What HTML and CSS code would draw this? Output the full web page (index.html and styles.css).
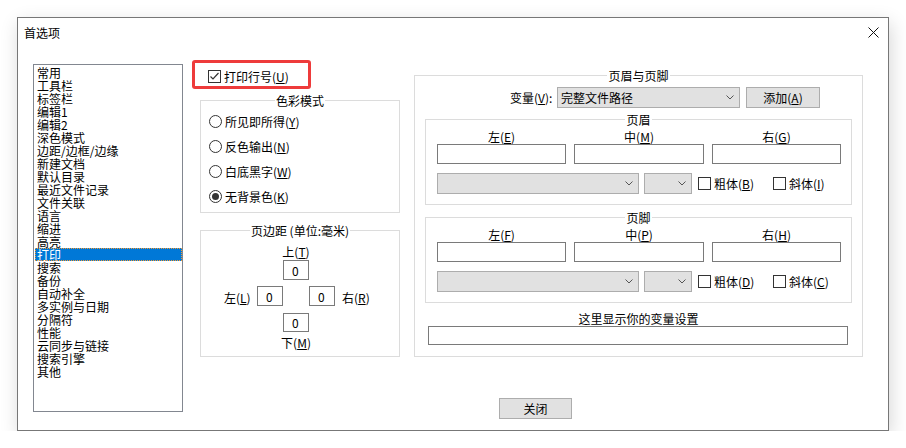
FILE: index.html
```html
<!DOCTYPE html>
<html lang="zh-CN">
<head>
  <meta charset="UTF-8" />
  <title>首选项</title>
  <link rel="stylesheet" href="styles.css">
</head>
<body>

  <div class="dialog">
    <!-- Title bar -->
    <div class="titlebar">
      <span class="title">首选项</span>
      <svg class="close-x" width="11" height="11" viewBox="0 0 11 11">
        <path d="M0.5 0.5 L10.5 10.5 M10.5 0.5 L0.5 10.5" />
      </svg>
    </div>

    <div class="content">
      <!-- Category list -->
      <ul class="listbox">
        <li>常用</li>
        <li>工具栏</li>
        <li>标签栏</li>
        <li>编辑1</li>
        <li>编辑2</li>
        <li>深色模式</li>
        <li>边距/边框/边缘</li>
        <li>新建文档</li>
        <li>默认目录</li>
        <li>最近文件记录</li>
        <li>文件关联</li>
        <li>语言</li>
        <li>缩进</li>
        <li>高亮</li>
        <li class="selected">打印</li>
        <li>搜索</li>
        <li>备份</li>
        <li>自动补全</li>
        <li>多实例与日期</li>
        <li>分隔符</li>
        <li>性能</li>
        <li>云同步与链接</li>
        <li>搜索引擎</li>
        <li>其他</li>
      </ul>

      <div class="pane">
        <div class="pane-top">
          <div class="mid">
            <div class="print-line">
              <span class="check">
                <svg width="11" height="11" viewBox="0 0 11 11"><path d="M1.5 5.5 L4 8 L9.5 2" /></svg>
              </span>
              打印行号(<u>U</u>)
            </div>

            <!-- Colour mode -->
            <div class="group color-group">
              <div class="group-title">色彩模式</div>
              <div class="radio-list">
                <div class="radio-row"><span class="radio"></span>所见即所得(<u>Y</u>)</div>
                <div class="radio-row"><span class="radio"></span>反色输出(<u>N</u>)</div>
                <div class="radio-row"><span class="radio"></span>白底黑字(<u>W</u>)</div>
                <div class="radio-row"><span class="radio on"></span>无背景色(<u>K</u>)</div>
              </div>
            </div>

            <!-- Page margins -->
            <div class="group margin-group">
              <div class="group-title">页边距 (单位:毫米)</div>
              <div class="margin-grid">
                <span class="m-top-label">上(<u>T</u>)</span>
                <input class="m-input m-top" value="0">
                <span class="m-left-label">左(<u>L</u>)</span>
                <input class="m-input m-left" value="0">
                <input class="m-input m-right" value="0">
                <span class="m-right-label">右(<u>R</u>)</span>
                <input class="m-input m-bottom" value="0">
                <span class="m-bottom-label">下(<u>M</u>)</span>
              </div>
            </div>
          </div>

          <!-- Header and footer -->
          <div class="group hf-group">
            <div class="group-title">页眉与页脚</div>
            <div class="var-row">
              <span class="var-label">变量(<u>V</u>):</span>
              <div class="combo var-combo">
                <span>完整文件路径</span>
                <svg class="chev" width="8" height="5" viewBox="0 0 8 5"><path d="M0.5 0.5 L4 4 L7.5 0.5" /></svg>
              </div>
              <button class="btn add-btn">添加(<u>A</u>)</button>
            </div>

            <div class="group sub-group">
              <div class="group-title">页眉</div>
              <div class="field-grid">
                <label>左(<u>E</u>)</label>
                <label>中(<u>M</u>)</label>
                <label>右(<u>G</u>)</label>
                <input class="field">
                <input class="field">
                <input class="field">
              </div>
              <div class="style-row">
                <div class="combo font-combo">
                  <span></span>
                  <svg class="chev" width="8" height="5" viewBox="0 0 8 5"><path d="M0.5 0.5 L4 4 L7.5 0.5" /></svg>
                </div>
                <div class="combo size-combo">
                  <span></span>
                  <svg class="chev" width="8" height="5" viewBox="0 0 8 5"><path d="M0.5 0.5 L4 4 L7.5 0.5" /></svg>
                </div>
                <div class="check-item bold"><span class="check"></span>粗体(<u>B</u>)</div>
                <div class="check-item"><span class="check"></span>斜体(<u>I</u>)</div>
              </div>
            </div>

            <div class="group sub-group">
              <div class="group-title">页脚</div>
              <div class="field-grid">
                <label>左(<u>F</u>)</label>
                <label>中(<u>P</u>)</label>
                <label>右(<u>H</u>)</label>
                <input class="field">
                <input class="field">
                <input class="field">
              </div>
              <div class="style-row">
                <div class="combo font-combo">
                  <span></span>
                  <svg class="chev" width="8" height="5" viewBox="0 0 8 5"><path d="M0.5 0.5 L4 4 L7.5 0.5" /></svg>
                </div>
                <div class="combo size-combo">
                  <span></span>
                  <svg class="chev" width="8" height="5" viewBox="0 0 8 5"><path d="M0.5 0.5 L4 4 L7.5 0.5" /></svg>
                </div>
                <div class="check-item bold"><span class="check"></span>粗体(<u>D</u>)</div>
                <div class="check-item"><span class="check"></span>斜体(<u>C</u>)</div>
              </div>
            </div>

            <div class="var-caption">这里显示你的变量设置</div>
            <input class="field var-field">
          </div>
        </div>

        <div class="actions">
          <button class="btn close-btn">关闭</button>
        </div>
      </div>
    </div>
  </div>

</body>
</html>
```

FILE: styles.css
```css
  body {
    margin: 0;
    background: #fff;
    font-family: "Noto Sans CJK SC", "Liberation Sans", sans-serif;
    font-size: 12px;
    color: #000;
  }

  u {
    text-decoration-thickness: 1px;
    text-underline-offset: 1px;
  }

  .dialog {
    margin: 17px 0 0 17px;
    width: 872px;
    height: 414px;
    box-sizing: border-box;
    border: 1px solid #777;
    background: #fff;
    box-shadow: 2px 6px 18px rgba(0, 0, 0, 0.16);
  }

  /* Title bar */
  .titlebar {
    display: flex;
    align-items: center;
    justify-content: space-between;
    height: 29px;
    padding: 0 9px 0 6px;
  }

  .close-x path {
    stroke: #111;
    stroke-width: 1;
    fill: none;
  }

  .content {
    display: flex;
    align-items: flex-start;
    padding: 13px 0 0 15px;
  }

  /* Category list */
  .listbox {
    list-style: none;
    margin: 4px 0 0;
    padding: 1px 0 0;
    width: 150px;
    height: 348px;
    box-sizing: border-box;
    border: 1px solid #828790;
  }

  .listbox li {
    height: 13px;
    line-height: 13px;
    margin-left: 1px;
    padding-left: 2px;
    white-space: nowrap;
  }

  .listbox li.selected {
    background: #0078d7;
    color: #fff;
    outline: 1px dotted #f59a32;
    outline-offset: -1px;
  }

  .pane {
    margin-left: 9px;
  }

  .pane-top {
    display: flex;
    align-items: flex-start;
  }

  .mid {
    width: 208px;
  }

  .print-line {
    display: flex;
    align-items: center;
    width: 119px;
    height: 29px;
    box-sizing: border-box;
    border: 3px solid #ee3b3b;
    border-radius: 3px;
    padding: 4px 0 0 13px;
    white-space: nowrap;
  }

  .check {
    display: inline-flex;
    align-items: center;
    justify-content: center;
    width: 13px;
    height: 13px;
    box-sizing: border-box;
    border: 1px solid #333;
    background: #fff;
    margin-right: 3px;
    flex-shrink: 0;
  }

  .check path {
    stroke: #333;
    stroke-width: 1.2;
    fill: none;
  }

  /* Group boxes */
  .group {
    border: 1px solid #dcdcdc;
    box-sizing: border-box;
  }

  .group-title {
    width: fit-content;
    margin: -7px auto 0;
    padding: 0 1px;
    background: #fff;
    line-height: 14px;
    white-space: nowrap;
  }

  .color-group {
    margin: 11px 0 0 8px;
    width: 200px;
    height: 113px;
  }

  .radio-list {
    margin-top: 1px;
    padding-left: 8px;
  }

  .radio-row {
    display: flex;
    align-items: center;
    height: 25px;
  }

  .radio {
    display: flex;
    align-items: center;
    justify-content: center;
    width: 13px;
    height: 13px;
    box-sizing: border-box;
    border: 1px solid #333;
    border-radius: 50%;
    margin-right: 3px;
  }

  .radio.on::after {
    content: '';
    width: 7px;
    height: 7px;
    border-radius: 50%;
    background: #333;
  }

  .margin-group {
    margin: 17px 0 0 8px;
    width: 200px;
    height: 127px;
  }

  .margin-grid {
    display: grid;
    grid-template-columns: 33px 26px 26px 26px 33px;
    grid-template-rows: 15px 26px 27px 23px 14px;
    margin: 7px 0 0 23px;
    line-height: 14px;
    white-space: nowrap;
  }

  .m-input {
    box-sizing: border-box;
    width: 26px;
    height: 20px;
    border: 1px solid #7a7a7a;
    padding: 0 0 0 8px;
    margin: 0;
    font: inherit;
    outline: none;
  }

  .m-top-label { grid-column: 3; grid-row: 1; justify-self: center; }
  .m-top { grid-column: 3; grid-row: 2; }
  .m-left-label { grid-column: 1; grid-row: 3; padding-top: 5px; }
  .m-left { grid-column: 2; grid-row: 3; }
  .m-right { grid-column: 4; grid-row: 3; }
  .m-right-label { grid-column: 5; grid-row: 3; padding: 5px 0 0 7px; }
  .m-bottom { grid-column: 3; grid-row: 4; height: 19px; }
  .m-bottom-label { grid-column: 3; grid-row: 5; justify-self: center; }

  /* Header and footer */
  .hf-group {
    margin: 15px 0 0 14px;
    width: 449px;
    height: 282px;
  }

  .var-row {
    display: flex;
    align-items: center;
    margin: 4px 0 0 95px;
  }

  .var-label {
    width: 43px;
    margin-right: 4px;
    white-space: nowrap;
  }

  .combo {
    display: flex;
    align-items: center;
    justify-content: space-between;
    height: 21px;
    box-sizing: border-box;
    border: 1px solid #adadad;
    background: #e1e1e1;
    padding: 0 5px 0 3px;
  }

  .chev path {
    stroke: #555;
    stroke-width: 1;
    fill: none;
  }

  .var-combo {
    width: 183px;
  }

  .btn {
    height: 21px;
    box-sizing: border-box;
    border: 1px solid #adadad;
    background: #e1e1e1;
    padding: 0;
    font: inherit;
    color: #000;
  }

  .add-btn {
    width: 74px;
    margin-left: 6px;
  }

  .sub-group {
    margin: 11px 0 0 10px;
    width: 427px;
    height: 86px;
  }

  .sub-group + .sub-group {
    margin-top: 12px;
  }

  .field-grid {
    display: grid;
    grid-template-columns: 129px 130px 129px;
    column-gap: 8px;
    margin: 3px 0 0 11px;
  }

  .field-grid label {
    text-align: center;
    line-height: 14px;
  }

  .field {
    display: block;
    height: 20px;
    box-sizing: border-box;
    border: 1px solid #7a7a7a;
    margin: 0;
    padding: 0 3px;
    font: inherit;
    outline: none;
  }

  .style-row {
    display: flex;
    align-items: center;
    margin: 9px 0 0 11px;
  }

  .font-combo {
    width: 202px;
  }

  .size-combo {
    width: 48px;
    margin-left: 5px;
  }

  .check-item {
    display: flex;
    align-items: center;
    white-space: nowrap;
  }

  .check-item.bold {
    margin-left: 6px;
    width: 75px;
  }

  .var-caption {
    margin-top: 9px;
    text-align: center;
    line-height: 14px;
  }

  .var-field {
    margin-left: 13px;
    width: 420px;
    height: 19px;
  }

  .actions {
    margin: 41px 0 0 307px;
  }

  .close-btn {
    width: 73px;
  }
```
